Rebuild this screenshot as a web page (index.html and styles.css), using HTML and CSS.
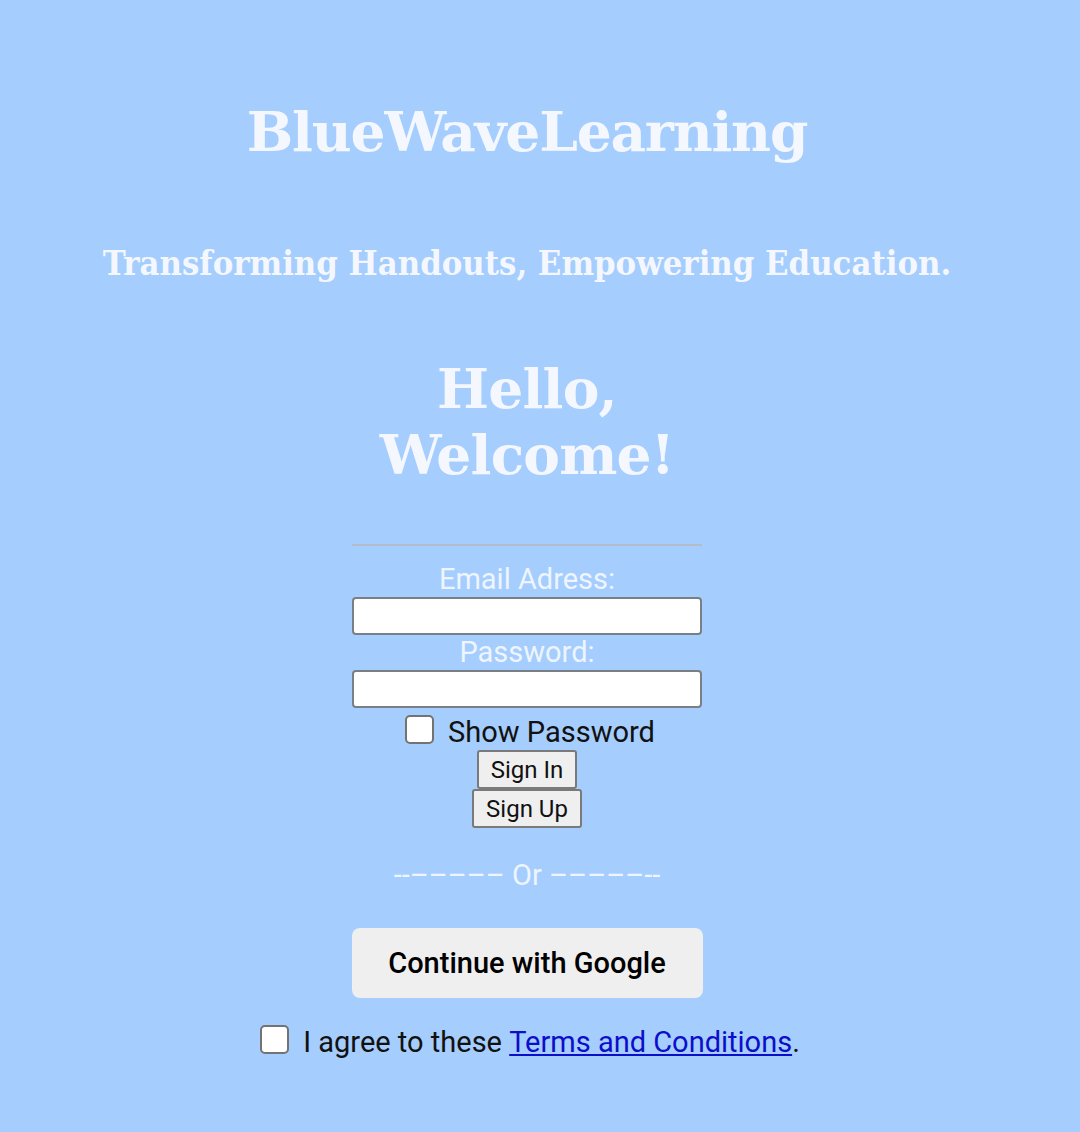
FILE: index.html
```html
<!DOCTYPE html>
<html lang="en">
<head>
<meta charset="utf-8">
<title>BlueWaveLearning</title>
<link rel="stylesheet" href="styles.css">
</head>
<body>
<main class="page">
  <h1 class="brand">BlueWaveLearning</h1>
  <p class="tagline">Transforming Handouts, Empowering Education.</p>
  <h2 class="welcome">Hello,<br>Welcome!</h2>
  <form class="form">
    <hr class="rule">
    <label class="label" for="email">Email Adress:</label>
    <input class="field" id="email" type="email">
    <label class="label" for="pw">Password:</label>
    <input class="field" id="pw" type="password">
    <label class="show"><span class="box"></span>Show Password</label>
    <button class="btn" type="button">Sign In</button>
    <button class="btn" type="button">Sign Up</button>
    <p class="or">--––––– Or –––––--</p>
    <button class="google" type="button">Continue with Google</button>
  </form>
  <p class="terms"><span class="box"></span><span>I agree to these&nbsp;<a href="#">Terms and Conditions</a>.</span></p>
</main>
</body>
</html>
```

FILE: styles.css
```css
html, body {
  margin: 0;
  padding: 0;
  background: #a5cdfd;
}
body {
  width: 1080px;
  height: 1132px;
  overflow: hidden;
}
.page {
  display: flex;
  flex-direction: column;
  align-items: center;
  padding-right: 26px;
  font-family: Roboto, "Liberation Sans", sans-serif;
}
.brand {
  margin: 96px 0 0;
  font-family: "DejaVu Serif", serif;
  font-weight: bold;
  font-size: 55px;
  line-height: 72px;
  color: #f4f8fe;
  letter-spacing: -1.2px;
}
.tagline {
  margin: 75px 0 0;
  font-family: "DejaVu Serif Condensed", "DejaVu Serif", serif;
  font-weight: bold;
  font-size: 34.3px;
  line-height: 40px;
  color: #f4f8fe;
}
.welcome {
  margin: 73px 0 0;
  font-family: "DejaVu Serif", serif;
  font-weight: bold;
  font-size: 55px;
  line-height: 66px;
  color: #f4f8fe;
  text-align: center;
  letter-spacing: -0.8px;
}
.form {
  display: flex;
  flex-direction: column;
  align-items: center;
  width: 350px;
  margin-top: 56px;
}
.rule {
  width: 350px;
  margin: 0;
  border: 0;
  border-top: 2px solid #b3bcc8;
}
.label {
  margin-top: 17px;
  font-size: 29px;
  line-height: 32px;
  color: #eef5fe;
}
.label + .field { margin-top: 2px; }
.field + .label { margin-top: 1px; }
.field {
  box-sizing: border-box;
  width: 350px;
  height: 38px;
  margin: 0;
  border: 2px solid #7a7f86;
  border-radius: 4px;
  background: #fff;
}
.show {
  display: flex;
  align-items: center;
  margin-top: 6px;
  padding-left: 6px;
  font-size: 29px;
  line-height: 36px;
  color: #111;
}
.box {
  box-sizing: border-box;
  display: inline-block;
  flex: none;
  width: 29px;
  height: 29px;
  margin-right: 14px;
  border: 2px solid #737373;
  border-radius: 5px;
  background: #fff;
}
.show .box { margin-top: -6px; }
.btn {
  margin: 0;
  padding: 0 12px;
  height: 39px;
  font-family: Roboto, "Liberation Sans", sans-serif;
  font-size: 24px;
  color: #111;
  background: #efefef;
  border: 2px solid #7a7a7a;
  border-radius: 3px;
}
.btn + .btn { margin-top: 0; }
.or {
  margin: 31px 0 0;
  font-size: 29px;
  line-height: 32px;
  color: #eef5fe;
  white-space: pre;
}
.google {
  box-sizing: border-box;
  width: 351px;
  height: 70px;
  margin-top: 37px;
  font-family: Roboto, "Liberation Sans", sans-serif;
  font-weight: 500;
  font-size: 29px;
  color: #000;
  background: #efefef;
  border: 0;
  border-radius: 8px;
}
.terms {
  display: flex;
  align-items: center;
  margin: 24px 0 0;
  padding-left: 6px;
  font-size: 29px;
  line-height: 40px;
  color: #111;
}
.terms .box { margin-top: -6px; }
.terms a {
  color: #0d0ec9;
  text-decoration: underline;
}
```
